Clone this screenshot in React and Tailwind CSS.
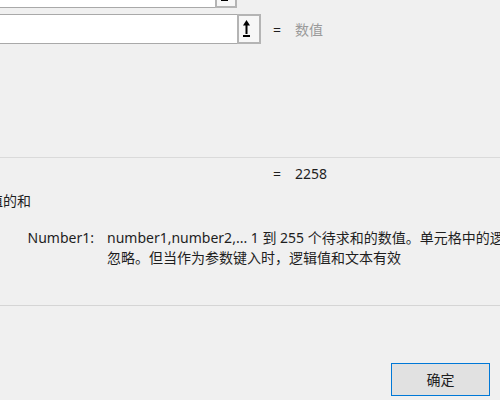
import React from "react";

const UpArrow = () => (
  <svg width="7" height="18" viewBox="0 0 7 18">
    <polygon points="3.5,0 0,5.5 7,5.5" fill="#000" />
    <rect x="2.5" y="5" width="2" height="9" fill="#000" />
    <rect x="0" y="15" width="7" height="2" fill="#000" />
  </svg>
);

// one argument row: edit box, collapse button, "=" and the evaluated value
const ArgRow = ({ value, muted, lift }) => (
  <div className="flex items-center h-[30px]">
    <div className="w-[237px] h-full bg-white border-y border-[#a9a9a9]" />
    <div className="w-[24px] h-full border-2 border-[#b4b4b4] bg-[#f7f7f7] flex items-center pl-[4px]">
      <UpArrow />
    </div>
    <span className={lift ? "ml-[12px] leading-[20px] -translate-y-[1px]" : "ml-[12px] leading-[20px] translate-y-[1px]"}>=</span>
    <span
      className={
        muted
          ? "ml-[14px] leading-[20px] text-[#9a9a9a] whitespace-nowrap translate-y-[1px]"
          : "ml-[14px] leading-[20px] whitespace-nowrap -translate-y-[1px]"
      }
    >
      {value}
    </span>
  </div>
);

export default function App() {
  return (
    <div className="w-[500px] h-[400px] overflow-hidden bg-[#f0f0f0] text-[14px] text-[#1e1e1e] font-['Noto_Sans','Noto_Sans_CJK_SC',sans-serif]">
      {/* Argument boxes */}
      <div className="-mt-[22px] flex flex-col gap-[6px]">
        <ArgRow value="{65,78,92,81,86,125,342,456,522,7}" lift />
        <ArgRow value="数值" muted />
      </div>

      {/* Result + description */}
      <div className="mt-[113px] border-t border-[#dadada]">
        <div className="pt-[6px] pl-[273px] flex leading-[20px]">
          <span>=</span>
          <span className="ml-[14px]">2258</span>
        </div>
        <div className="mt-[7px] -ml-[165px] leading-[20px] whitespace-nowrap">
          计算单元格区域中所有数值的和
        </div>
        <div className="mt-[17px] flex leading-[20px] whitespace-nowrap">
          <div className="w-[94px] text-right shrink-0">Number1:</div>
          <div className="ml-[13px] shrink-0">
            <div>number1,number2,... 1 到 255 个待求和的数值。单元格中的逻辑值和文本将被</div>
            <div>忽略。但当作为参数键入时，逻辑值和文本有效</div>
          </div>
        </div>
      </div>

      {/* Footer */}
      <div className="mt-[37px] border-t border-[#d5d5d5]">
        <div className="mt-[57px] ml-[391px] w-[99px] h-[33px] border border-[#0078d7] bg-[#e1e1e1] flex items-center justify-center">
          确定
        </div>
      </div>
    </div>
  );
}
